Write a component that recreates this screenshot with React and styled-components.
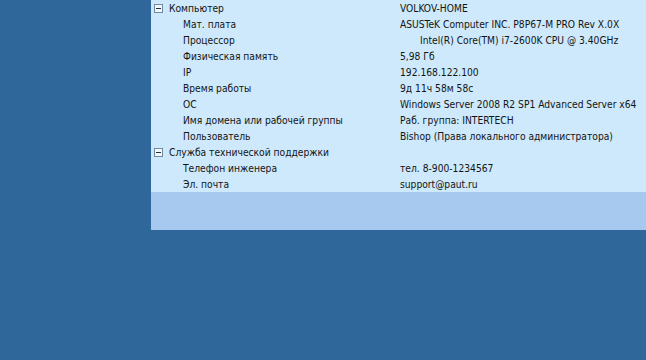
import React from "react";
import styled, { createGlobalStyle } from "styled-components";

const Global = createGlobalStyle`
  html, body { margin: 0; padding: 0; background: #30679a; }
  body { width: 646px; height: 360px; overflow: hidden; }
`;

const Page = styled.div`
  width: 646px;
  height: 360px;
  background: #30679a;
  display: flex;
  padding-left: 151px;
  box-sizing: border-box;
  align-items: flex-start;
`;

const Panel = styled.div`
  flex: 1;
  display: flex;
  flex-direction: column;
  background: #a7c9ef;
  height: 230px;
`;

const List = styled.div`
  background: #cde9fb;
  display: flex;
  flex-direction: column;
`;

const Row = styled.div`
  height: 16px;
  display: grid;
  grid-template-columns: 249px 1fr;
  align-items: center;
  font-family: "DejaVu Sans Condensed", "DejaVu Sans", sans-serif;
  font-size: 10.2px;
  color: #141414;
  white-space: nowrap;
`;

const Label = styled.div`
  display: flex;
  align-items: center;
  padding-left: ${(p) => (p.$group ? "3px" : "32px")};
`;

const Value = styled.div`
  padding-left: ${(p) => (p.$indent ? "20px" : "0")};
`;

const Toggle = styled.span`
  width: 7px;
  height: 7px;
  border: 1px solid #6f8aa3;
  background: #f4f8fb;
  margin-right: 6px;
  position: relative;
  flex: none;
  &::after {
    content: "";
    position: absolute;
    left: 1px;
    top: 3px;
    width: 5px;
    height: 1px;
    background: #203040;
  }
`;

const rows = [
  { group: true, label: "Компьютер", value: "VOLKOV-HOME" },
  { label: "Мат. плата", value: "ASUSTeK Computer INC. P8P67-M PRO Rev X.0X" },
  { label: "Процессор", value: "Intel(R) Core(TM) i7-2600K CPU @ 3.40GHz", indent: true },
  { label: "Физическая память", value: "5,98 Гб" },
  { label: "IP", value: "192.168.122.100" },
  { label: "Время работы", value: "9д 11ч 58м 58с" },
  { label: "ОС", value: "Windows Server 2008 R2 SP1 Advanced Server x64" },
  { label: "Имя домена или рабочей группы", value: "Раб. группа: INTERTECH" },
  { label: "Пользователь", value: "Bishop (Права локального администратора)" },
  { group: true, label: "Служба технической поддержки", value: "" },
  { label: "Телефон инженера", value: "тел. 8-900-1234567" },
  { label: "Эл. почта", value: "support@paut.ru" },
];

export default function App() {
  return (
    <>
      <Global />
      <Page>
        <Panel>
          <List>
            {rows.map((r, i) => (
              <Row key={i}>
                <Label $group={r.group}>
                  {r.group && <Toggle />}
                  {r.label}
                </Label>
                <Value $indent={r.indent}>{r.value}</Value>
              </Row>
            ))}
          </List>
        </Panel>
      </Page>
    </>
  );
}
